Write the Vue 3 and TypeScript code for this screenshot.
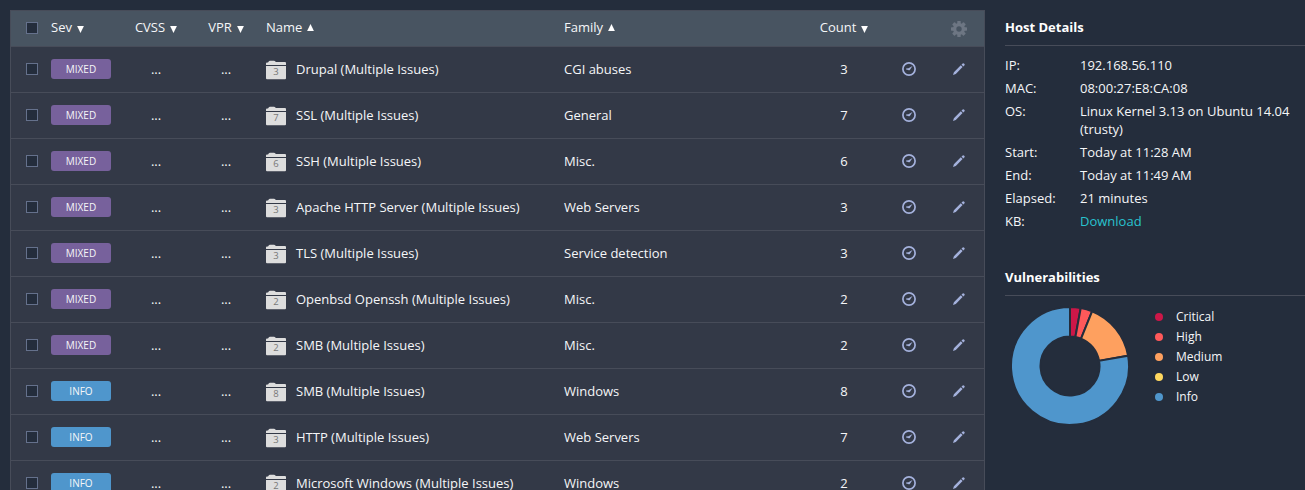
<script setup lang="ts">
interface Issue {
  sev: 'mixed' | 'info'
  name: string
  folder: number
  family: string
  count: number
}

const issues: Issue[] = [
  { sev: 'mixed', name: 'Drupal', folder: 3, family: 'CGI abuses', count: 3 },
  { sev: 'mixed', name: 'SSL', folder: 7, family: 'General', count: 7 },
  { sev: 'mixed', name: 'SSH', folder: 6, family: 'Misc.', count: 6 },
  { sev: 'mixed', name: 'Apache HTTP Server', folder: 3, family: 'Web Servers', count: 3 },
  { sev: 'mixed', name: 'TLS', folder: 3, family: 'Service detection', count: 3 },
  { sev: 'mixed', name: 'Openbsd Openssh', folder: 2, family: 'Misc.', count: 2 },
  { sev: 'mixed', name: 'SMB', folder: 2, family: 'Misc.', count: 2 },
  { sev: 'info', name: 'SMB', folder: 8, family: 'Windows', count: 8 },
  { sev: 'info', name: 'HTTP', folder: 3, family: 'Web Servers', count: 7 },
  { sev: 'info', name: 'Microsoft Windows', folder: 2, family: 'Windows', count: 2 },
]

const columns = [
  { label: 'Sev', cls: 'c-sev', up: false },
  { label: 'CVSS', cls: 'c-score', up: false },
  { label: 'VPR', cls: 'c-score', up: false },
  { label: 'Name', cls: 'c-text', up: true },
  { label: 'Family', cls: 'c-text', up: true },
  { label: 'Count', cls: 'c-count', up: false },
]

const details = [
  { label: 'IP:', value: '192.168.56.110' },
  { label: 'MAC:', value: '08:00:27:E8:CA:08' },
  { label: 'OS:', value: 'Linux Kernel 3.13 on Ubuntu 14.04 (trusty)' },
  { label: 'Start:', value: 'Today at 11:28 AM' },
  { label: 'End:', value: 'Today at 11:49 AM' },
  { label: 'Elapsed:', value: '21 minutes' },
  { label: 'KB:', value: 'Download', link: true },
]

// start and end are clockwise angles in degrees, 0 at the top
const severities = [
  { label: 'Critical', color: '#cc1748', start: 0, end: 10.5 },
  { label: 'High', color: '#ff595a', start: 10.5, end: 22 },
  { label: 'Medium', color: '#fea05f', start: 22, end: 80 },
  { label: 'Low', color: '#ffd85f', start: 80, end: 80 },
  { label: 'Info', color: '#4f96cc', start: 80, end: 360 },
]

function point(radius: number, angle: number): string {
  const a = (angle * Math.PI) / 180
  return `${(60 + radius * Math.sin(a)).toFixed(2)} ${(60 - radius * Math.cos(a)).toFixed(2)}`
}

function arc(start: number, end: number): string {
  const large = end - start > 180 ? 1 : 0
  return `M${point(59, start)}A59 59 0 ${large} 1 ${point(59, end)}L${point(29.5, end)}A29.5 29.5 0 ${large} 0 ${point(29.5, start)}Z`
}

const slices = severities.filter((s) => s.end > s.start)
</script>

<template>
  <div class="page">
    <main class="table">
      <div class="row head">
        <div class="c-check"><span class="box" /></div>
        <div v-for="col in columns" :key="col.label" :class="col.cls">
          <span>{{ col.label }}</span>
          <svg class="sort" :class="{ up: col.up }" width="7" height="7" viewBox="0 0 7 7">
            <path :d="col.up ? 'M3.5 0L6.9 7H.1Z' : 'M.1 0H6.9L3.5 7Z'" />
          </svg>
        </div>
        <div />
        <div class="c-icon">
          <svg class="gear" width="16" height="16" viewBox="-8 -8 16 16">
            <rect v-for="n in 4" :key="n" x="-1.7" y="-8" width="3.4" height="16" rx=".6" :transform="`rotate(${n * 45})`" />
            <circle r="6" />
            <circle class="hub" r="2.7" />
          </svg>
        </div>
      </div>
      <div v-for="(issue, i) in issues" :key="i" class="row">
        <div class="c-check"><span class="box" /></div>
        <div class="c-sev"><span class="badge" :class="issue.sev">{{ issue.sev.toUpperCase() }}</span></div>
        <div class="c-score">...</div>
        <div class="c-score">...</div>
        <div class="c-text">
          <span class="folder">
            <svg width="20" height="20" viewBox="0 0 20 20">
              <path d="M0 5V3.5Q0 2.6 1 2.5H2L2.7 1.4Q3.1 .8 4 .8H8Q8.9 .8 9.3 1.4L10 2H19Q20 2 20 3V5Z" />
              <path d="M0 6H20V18.3Q20 19.3 19 19.3H1Q0 19.3 0 18.3Z" />
            </svg>
            <span class="num">{{ issue.folder }}</span>
          </span>
          <span>{{ issue.name }} (Multiple Issues)</span>
        </div>
        <div class="c-text">{{ issue.family }}</div>
        <div class="c-count">{{ issue.count }}</div>
        <div class="c-icon">
          <svg width="14" height="14" viewBox="0 0 14 14">
            <circle class="ring" cx="7" cy="7" r="6.1" />
            <path class="tint" d="M10.5 4.1L8 7.7Q7.2 8.7 6.2 8L4.1 7.5V6.5L6.5 6.3Z" />
          </svg>
        </div>
        <div class="c-icon">
          <svg class="tint" width="12" height="12" viewBox="0 0 12 12">
            <path d="M0 12L.9 9.2L7.8 2.3L9.6 4.1L2.8 11.1ZM8.5 1.6L9.7 .5Q10.4 -.1 11.2 .7Q12.1 1.6 11.5 2.3L10.3 3.4Z" />
          </svg>
        </div>
      </div>
    </main>

    <aside class="side">
      <section>
        <h2>Host Details</h2>
        <dl>
          <template v-for="d in details" :key="d.label">
            <dt>{{ d.label }}</dt>
            <dd :class="{ link: d.link }">{{ d.value }}</dd>
          </template>
        </dl>
      </section>
      <section class="vulns">
        <h2>Vulnerabilities</h2>
        <div class="chart">
          <svg width="120" height="120" viewBox="0 0 120 120">
            <path v-for="s in slices" :key="s.label" class="slice" :d="arc(s.start, s.end)" :fill="s.color" />
          </svg>
          <ul>
            <li v-for="s in severities" :key="s.label">
              <i :style="{ background: s.color }" />{{ s.label }}
            </li>
          </ul>
        </div>
      </section>
    </aside>
  </div>
</template>

<style>
body {
  margin: 0;
  background: #242d3c;
  overflow: hidden;
}
</style>

<style scoped>
.page {
  display: flex;
  gap: 20px;
  height: 490px;
  padding: 10px 0 0 10px;
  box-sizing: border-box;
  overflow: hidden;
  background: #242d3c;
  color: #f5f6f8;
  font: 13px/18px "Open Sans", "Noto Sans", sans-serif;
}
.table {
  flex: 0 0 973px;
  align-self: flex-start;
  border: 1px solid #474c59;
}
.row {
  display: grid;
  grid-template-columns: 40px 70px 70px 70px 298px 250px 70px 60px 40px;
  align-items: center;
  box-sizing: border-box;
  height: 46px;
  padding-bottom: 1px;
  background: #333947;
  border-bottom: 1px solid #474c59;
}
.head {
  height: 36px;
  padding-bottom: 3px;
  background: #485461;
}
.head > div {
  height: 20px;
  display: flex;
  align-items: center;
}
.head > .c-check { padding-top: 2px; }
.c-check { padding-left: 15px; }
.box {
  display: block;
  box-sizing: border-box;
  width: 12px;
  height: 12px;
  border: 1px solid #65718c;
  background: #242d3c;
}
.c-score, .c-count, .c-icon {
  display: flex;
  align-items: center;
  justify-content: center;
}
.c-text {
  display: flex;
  align-items: center;
  padding-left: 5px;
  white-space: nowrap;
}
.sort {
  margin: 4px 0 0 5px;
  fill: #fff;
}
.sort.up { margin-top: 0; }
.badge {
  display: block;
  width: 60px;
  height: 20px;
  border-radius: 3px;
  font-size: 10px;
  line-height: 20px;
  text-align: center;
}
.mixed { background: #77619c; }
.info { background: #4f96cc; }
.folder {
  display: grid;
  width: 20px;
  height: 19px;
  margin: 0 10px 0 0;
  fill: #ddd;
}
.folder > * { grid-area: 1 / 1; }
.num {
  padding-top: 5px;
  color: #777;
  font-size: 9.5px;
  line-height: 13px;
  text-align: center;
}
.ring { fill: none; stroke: #a4b1dc; stroke-width: 1.7; }
.tint { fill: #a4b1dc; }
.gear { margin-top: 3px; fill: #6d7683; }
.hub { fill: #485461; }

.side { flex: 1; }
h2 {
  margin: 0;
  height: 35px;
  border-bottom: 1px solid #474c59;
  font-size: 13px;
  line-height: 34px;
  color: #fff;
}
dl {
  display: grid;
  grid-template-columns: 75px 215px;
  row-gap: 5px;
  margin: 10px 0 0;
}
dt, dd { margin: 0; }
.link { color: #28c3cf; }
.vulns { margin-top: 30px; }
.chart { display: flex; padding: 10px 0 0 5px; }
.slice { stroke: #242d3c; stroke-width: 2; }
ul {
  list-style: none;
  margin: 1px 0 0 25px;
  padding: 0;
  font-size: 12px;
  line-height: 20px;
}
li { display: flex; align-items: center; }
i {
  width: 8px;
  height: 8px;
  margin-right: 13px;
  border-radius: 50%;
}
</style>
